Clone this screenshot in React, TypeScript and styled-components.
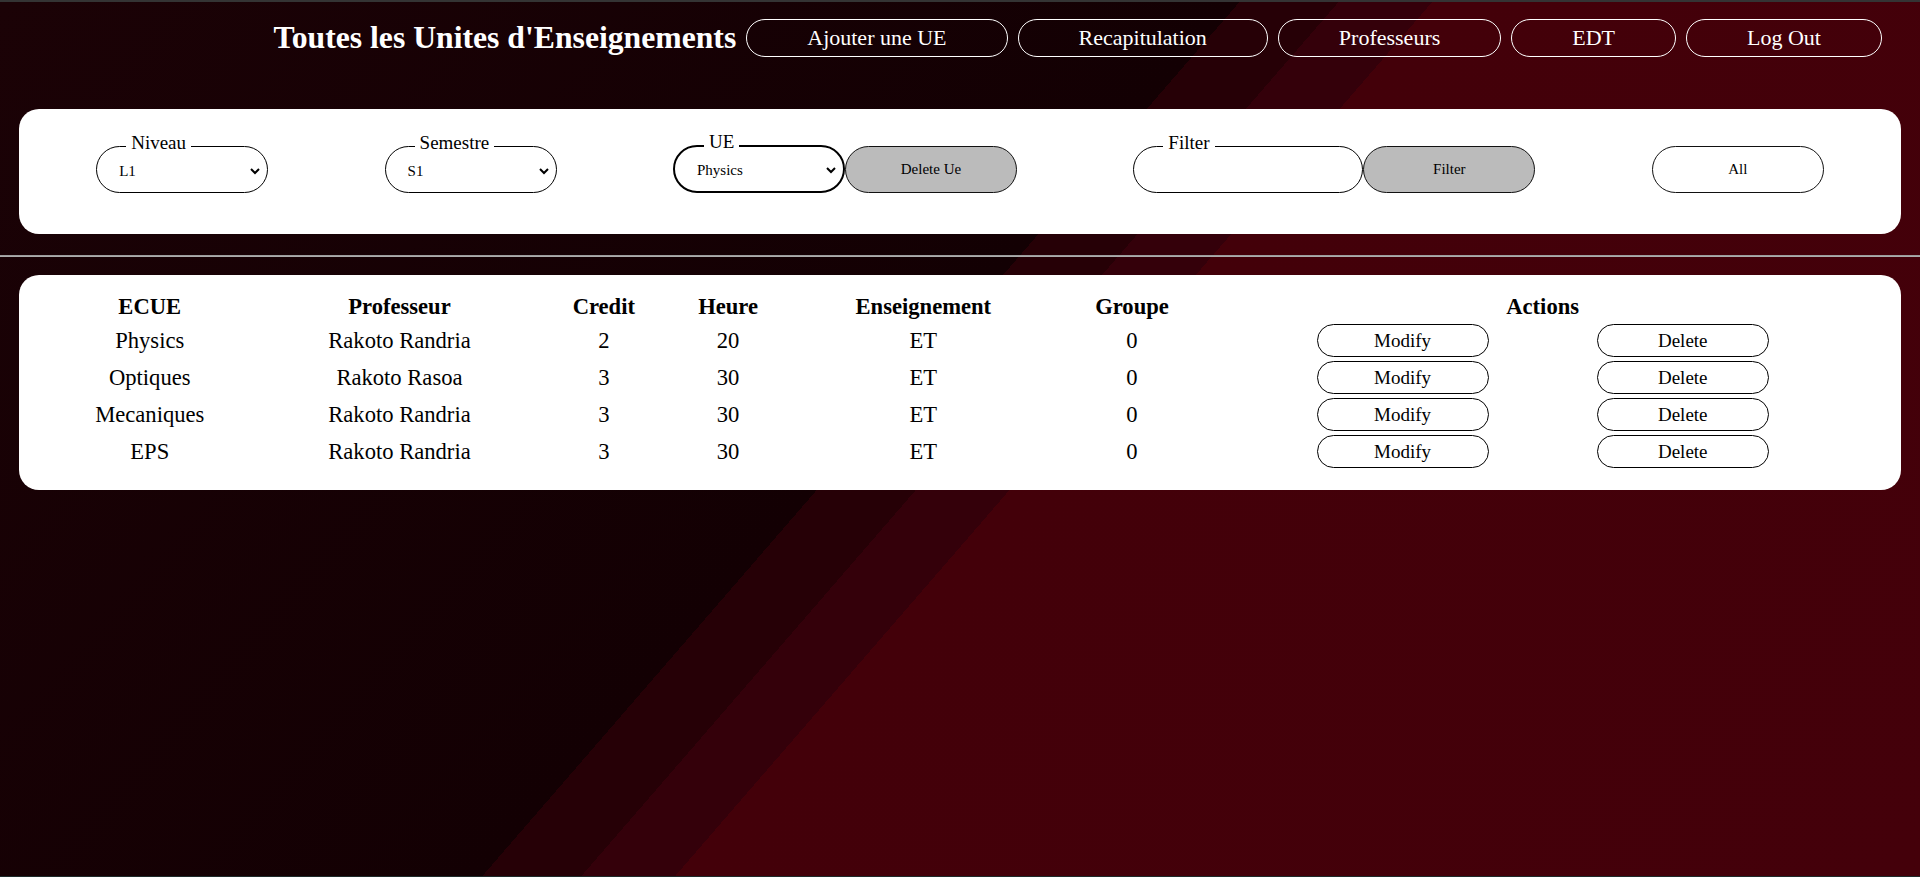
import React from "react";
import styled, { createGlobalStyle } from "styled-components";

const GlobalStyle = createGlobalStyle`
  html, body {
    margin: 0;
    padding: 0;
  }
  body {
    font-family: "Liberation Serif", "Times New Roman", serif;
  }
  * { box-sizing: border-box; }
`;

const Page = styled.div`
  min-height: 100vh;
  border-top: 2px solid #343434;
  border-bottom: 1px solid #1e2b2b;
  background: linear-gradient(
    130.9deg,
    #1b0206 0%,
    #130003 46.3%,
    #260006 46.3%,
    #260006 50%,
    #34000a 50%,
    #34000a 53.5%,
    #430009 53.5%,
    #44000a 100%
  );
  font-family: "Liberation Serif", "Times New Roman", serif;
`;

const Header = styled.header`
  display: flex;
  justify-content: flex-end;
  align-items: center;
  gap: 10px;
  padding: 17px 38px 0 0;
`;

const Title = styled.h1`
  margin: 0;
  color: #fff;
  font-size: 31.7px;
  font-weight: bold;
  white-space: nowrap;
`;

const NavButton = styled.button`
  height: 38px;
  padding: 0 60px;
  border: 1px solid #fff;
  border-radius: 20px;
  background: transparent;
  color: #fff;
  font-family: inherit;
  font-size: 22px;
  white-space: nowrap;
  cursor: pointer;
`;

const FilterCard = styled.section`
  margin: 52px 19px 0;
  padding: 22px 19px 41px;
  background: #fff;
  border-radius: 20px;
  display: flex;
  justify-content: space-around;
  align-items: flex-end;
`;

const Group = styled.div`
  display: flex;
  align-items: flex-end;
`;

const Field = styled.fieldset<{ $w?: number; $thick?: boolean }>`
  margin: 0;
  width: ${(p) => p.$w ?? 172}px;
  padding: 0 4px 11px 18px;
  border: ${(p) => (p.$thick ? "2px" : "1px")} solid #000;
  border-radius: 24px;
  min-inline-size: 0;
`;

const Legend = styled.legend`
  margin-left: 11px;
  padding: 0 5px 7px;
  font-size: 19px;
  color: #000;
`;

const Select = styled.select`
  display: block;
  width: 100%;
  height: 20px;
  border: none;
  outline: none;
  background: transparent;
  font-family: "Liberation Serif", "Times New Roman", serif;
  font-size: 15px;
  color: #000;
`;

const TextInput = styled.input`
  display: block;
  width: 100%;
  height: 20px;
  border: none;
  outline: none;
  background: transparent;
  font-family: "Liberation Serif", "Times New Roman", serif;
  font-size: 15px;
`;

const PillButton = styled.button<{ $gray?: boolean }>`
  width: 172px;
  height: 47px;
  border: 1px solid #111;
  border-radius: 24px;
  background: ${(p) => (p.$gray ? "#bbbbbb" : "#fff")};
  color: #000;
  font-family: "Liberation Serif", "Times New Roman", serif;
  font-size: 15px;
  cursor: pointer;
`;

const Rule = styled.hr`
  margin: 21px 0 18px;
  height: 1px;
  border: none;
  border-top: 1px solid #9c9c9c;
  border-bottom: 1px solid #acacac;
  background: #e6e6e6;
`;

const TableCard = styled.section`
  margin: 0 19px;
  padding: 16px 21px 19px;
  background: #fff;
  border-radius: 20px;
`;

const Table = styled.table`
  width: 100%;
  font-size: 22.6px;
  color: #000;
  text-align: center;
`;

const Th = styled.th`
  font-weight: bold;
  padding: 1px;
`;

const Td = styled.td`
  padding: 1px;
  vertical-align: middle;
`;

const Actions = styled.div`
  display: flex;
  justify-content: space-evenly;
`;

const RowButton = styled.button`
  width: 172px;
  height: 33px;
  border: 1px solid #000;
  border-radius: 17px;
  background: #fff;
  color: #000;
  font-family: "Liberation Serif", "Times New Roman", serif;
  font-size: 19px;
  cursor: pointer;
`;

const rows = [
  { ecue: "Physics", prof: "Rakoto Randria", credit: 2, heure: 20, ens: "ET", groupe: 0 },
  { ecue: "Optiques", prof: "Rakoto Rasoa", credit: 3, heure: 30, ens: "ET", groupe: 0 },
  { ecue: "Mecaniques", prof: "Rakoto Randria", credit: 3, heure: 30, ens: "ET", groupe: 0 },
  { ecue: "EPS", prof: "Rakoto Randria", credit: 3, heure: 30, ens: "ET", groupe: 0 },
];

export default function App() {
  return (
    <>
      <GlobalStyle />
      <Page>
        <Header>
          <Title>Toutes les Unites d'Enseignements</Title>
          <NavButton>Ajouter une UE</NavButton>
          <NavButton>Recapitulation</NavButton>
          <NavButton>Professeurs</NavButton>
          <NavButton>EDT</NavButton>
          <NavButton>Log Out</NavButton>
        </Header>

        <FilterCard>
          <Field>
            <Legend>Niveau</Legend>
            <Select defaultValue="L1">
              <option>L1</option>
              <option>L2</option>
              <option>L3</option>
            </Select>
          </Field>
          <Field>
            <Legend>Semestre</Legend>
            <Select defaultValue="S1">
              <option>S1</option>
              <option>S2</option>
            </Select>
          </Field>
          <Group>
            <Field $thick>
              <Legend>UE</Legend>
              <Select defaultValue="Physics">
                <option>Physics</option>
              </Select>
            </Field>
            <PillButton $gray>Delete Ue</PillButton>
          </Group>
          <Group>
            <Field $w={230}>
              <Legend>Filter</Legend>
              <TextInput type="text" />
            </Field>
            <PillButton $gray>Filter</PillButton>
          </Group>
          <PillButton>All</PillButton>
        </FilterCard>

        <Rule />

        <TableCard>
          <Table>
            <thead>
              <tr>
                <Th>ECUE</Th>
                <Th>Professeur</Th>
                <Th>Credit</Th>
                <Th>Heure</Th>
                <Th>Enseignement</Th>
                <Th>Groupe</Th>
                <Th>Actions</Th>
              </tr>
            </thead>
            <tbody>
              {rows.map((r) => (
                <tr key={r.ecue}>
                  <Td>{r.ecue}</Td>
                  <Td>{r.prof}</Td>
                  <Td>{r.credit}</Td>
                  <Td>{r.heure}</Td>
                  <Td>{r.ens}</Td>
                  <Td>{r.groupe}</Td>
                  <Td>
                    <Actions>
                      <RowButton>Modify</RowButton>
                      <RowButton>Delete</RowButton>
                    </Actions>
                  </Td>
                </tr>
              ))}
            </tbody>
          </Table>
        </TableCard>
      </Page>
    </>
  );
}
